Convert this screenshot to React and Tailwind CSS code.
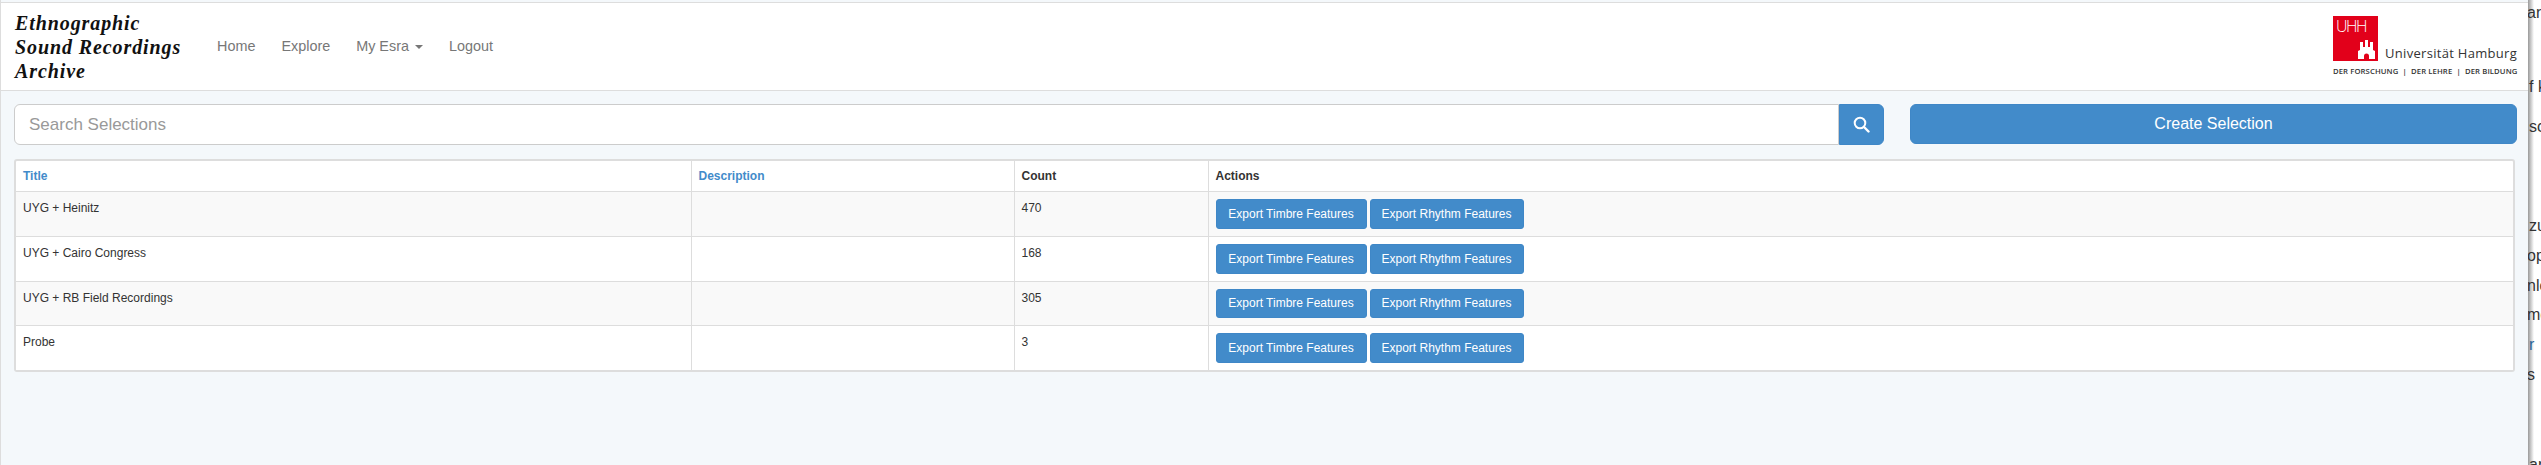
import React from 'react';

const rows = [
  { title: 'UYG + Heinitz', count: 470, height: 'h-[45px]', btn: 'h-[30px]' },
  { title: 'UYG + Cairo Congress', count: 168, height: 'h-[45px]', btn: 'h-[30px]' },
  { title: 'UYG + RB Field Recordings', count: 305, height: 'h-[44px]', btn: 'h-[29px]' },
  { title: 'Probe', count: 3, height: 'h-[45px]', btn: 'h-[30px]' },
];

const Logo = () => (
  <div className="w-[184px] shrink-0 font-['Open_Sans',sans-serif] text-[#333]">
    <div className="flex items-end">
      <div className="w-[45px] h-[45px] shrink-0 bg-[#e2001a] relative overflow-hidden">
        <span className="absolute left-[3px] top-[0px] text-white text-[16px] font-light leading-[20px] tracking-[-1.5px]">UHH</span>
        <svg className="absolute left-[25px] top-[23px]" width="17" height="21" viewBox="0 0 17 21" fill="#fff">
          <path d="M2 3h3v5h2V1h3v7h2V3h3v8l2 1v8h-6v-3a2.500 2.500 0 0 0-5 0v3H0v-8l2-1z" />
        </svg>
      </div>
      <span className="ml-[7px] text-[13px] leading-[15px] tracking-[0.3px] whitespace-nowrap">Universität Hamburg</span>
    </div>
    <div className="mt-[4px] text-[7.7px] leading-[12px] font-semibold whitespace-nowrap tracking-[0.1px]">DER FORSCHUNG &nbsp;|&nbsp; DER LEHRE &nbsp;|&nbsp; DER BILDUNG</div>
  </div>
);

const App = () => {
  return (
    <div className="flex h-[465px] w-[2541px] overflow-hidden font-['Liberation_Sans',Arial,sans-serif] text-[12px] text-[#333] bg-white">
      <div className="w-[2528px] shrink-0 bg-[#f4f8fb] border-l border-[#ddd] pt-[2px]">
        {/* Navbar */}
        <nav className="h-[89px] bg-white border-y border-[#ddd] flex items-center pl-[14px] pr-[11px] justify-between">
          <div className="flex items-center">
            <div className="w-[187px] font-['Liberation_Serif',serif] italic font-bold text-[20px] leading-[24px] tracking-[0.9px] text-[#111]">
              Ethnographic<br />Sound Recordings<br />Archive
            </div>
            <ul className="flex text-[14.4px] text-[#777] gap-[26px] ml-[15px]">
              <li>Home</li>
              <li>Explore</li>
              <li className="flex items-center">My Esra <span className="ml-[6px] mt-[2px] border-x-[4px] border-x-transparent border-t-[4px] border-t-[#777]" /></li>
              <li>Logout</li>
            </ul>
          </div>
          <Logo />
        </nav>

        {/* Search */}
        <div className="flex pl-[13px] pr-[11px] mt-[13px]">
          <div className="flex w-[1870px]">
            <input
              placeholder="Search Selections"
              className="flex-1 h-[41px] rounded-l-[6px] border border-[#ccc] bg-white px-[14px] text-[17px] placeholder:text-[#999] outline-none"
            />
            <button className="w-[45px] h-[41px] bg-[#428bca] rounded-r-[6px] border border-[#3f87c7] flex items-center justify-center">
              <svg width="17" height="17" viewBox="0 0 17 17" fill="none" stroke="#fff" strokeWidth="2">
                <circle cx="7" cy="7" r="5.300" />
                <path d="M11 11l4.500 4.500" strokeWidth="2.400" strokeLinecap="round" />
              </svg>
            </button>
          </div>
          <button className="ml-[26px] flex-1 h-[40px] bg-[#428bca] rounded-[6px] border border-[#3f87c7] text-white text-[16px]">Create Selection</button>
        </div>

        {/* Table */}
        <div className="ml-[13px] mr-[13px] mt-[14px] border-2 border-[#ddd] rounded-[3px] bg-white">
          <table className="w-full table-fixed border-collapse">
            <thead>
              <tr className="h-[30px] text-left font-bold">
                <th className="w-[675px] px-[7px] text-[#428bca] font-bold">Title</th>
                <th className="w-[323px] px-[7px] border-l border-[#ddd] text-[#428bca] font-bold">Description</th>
                <th className="w-[194px] px-[7px] border-l border-[#ddd] font-bold">Count</th>
                <th className="px-[7px] border-l border-[#ddd] font-bold">Actions</th>
              </tr>
            </thead>
            <tbody>
              {rows.map((r, i) => (
                <tr key={i} className={`${r.height} border-t border-[#ddd] ${i % 2 === 0 ? 'bg-[#f9f9f9]' : 'bg-white'}`}>
                  <td className="px-[7px] pt-[7px] align-top">{r.title}</td>
                  <td className="px-[7px] border-l border-[#ddd]"></td>
                  <td className="px-[7px] pt-[7px] align-top border-l border-[#ddd]">{r.count}</td>
                  <td className="px-[7px] pt-[7px] align-top border-l border-[#ddd]">
                    <div className="flex gap-[3px]">
                      <button className={`w-[151px] ${r.btn} bg-[#428bca] border border-[#3f87c7] rounded-[3px] text-white text-[12px]`}>Export Timbre Features</button>
                      <button className={`w-[154px] ${r.btn} bg-[#428bca] border border-[#3f87c7] rounded-[3px] text-white text-[12px]`}>Export Rhythm Features</button>
                    </div>
                  </td>
                </tr>
              ))}
            </tbody>
          </table>
        </div>
      </div>

      {/* Window behind, cut off at the edge */}
      <div className="flex-1 bg-[linear-gradient(to_right,#999,#ddd_4px,#fff_6px)] overflow-hidden text-[16px] leading-[20px] whitespace-nowrap text-[#333] font-['Liberation_Sans',sans-serif] pl-[1px]">
        <div className="mt-[3px] -ml-[2px]">art</div>
        <div className="mt-[54px]">f k</div>
        <div className="mt-[20px]">sch</div>
        <div className="mt-[79px]">zu</div>
        <div className="mt-[10px] -ml-[2px]">op</div>
        <div className="mt-[10px] -ml-[2px]">nlo</div>
        <div className="mt-[9px] -ml-[2px]">me</div>
        <div className="mt-[10px] text-[#2a6496]">r</div>
        <div className="mt-[10px] -ml-[2px]">s</div>
        <div className="mt-[70px]">ar</div>
      </div>
    </div>
  );
};

export default App;
